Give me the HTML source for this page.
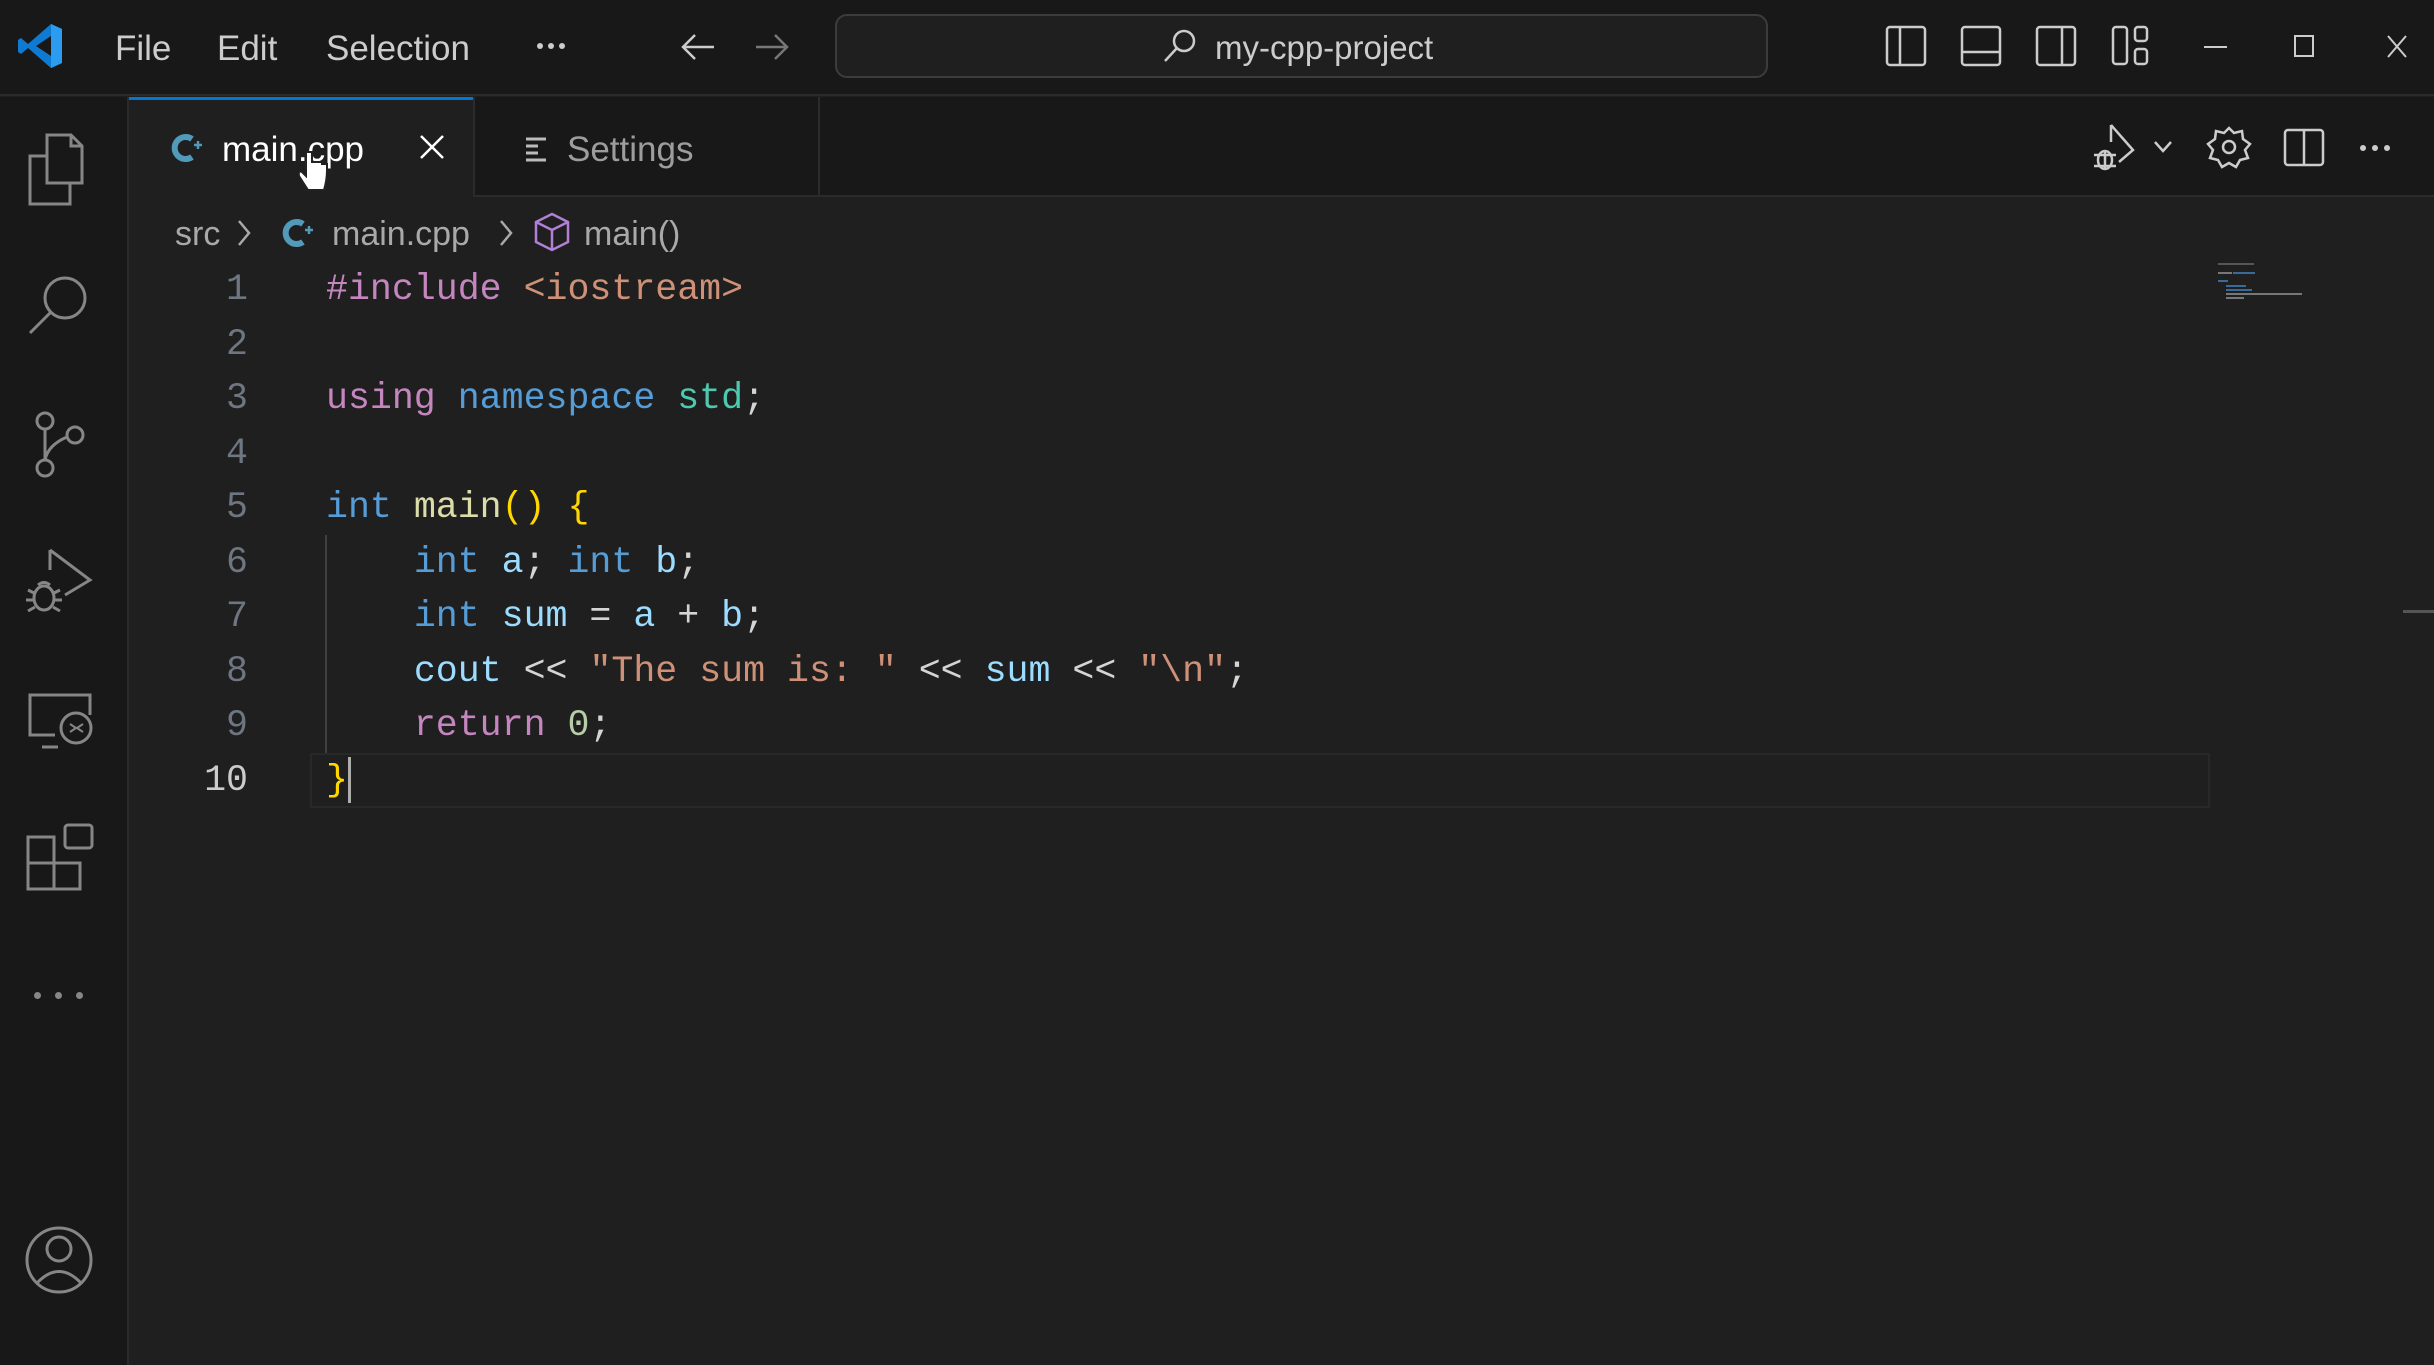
<!DOCTYPE html><html><head><meta charset="utf-8"><style>
*{margin:0;padding:0;box-sizing:border-box}
body{width:2434px;height:1365px;background:#1f1f1f;overflow:hidden;position:relative;font-family:"Liberation Sans",sans-serif;color:#ccc}
.a{position:absolute}
.t{position:absolute;white-space:pre;line-height:1}
svg{position:absolute;overflow:visible}
.code{font-family:"Liberation Mono",monospace;font-size:36.6px;white-space:pre;position:absolute;left:326px;height:54.5px;line-height:54.5px;color:#d4d4d4}
.ln{font-family:"Liberation Mono",monospace;font-size:36.6px;position:absolute;right:2186px;height:54.5px;line-height:54.5px;color:#6e7681}
.k{color:#c586c0}.s{color:#ce9178}.b{color:#569cd6}.ty{color:#4ec9b0}.f{color:#dcdcaa}.y{color:#ffd700}.v{color:#9cdcfe}.n{color:#b5cea8}
</style></head><body>
<!-- title bar -->
<div class="a" style="left:0;top:0;width:2434px;height:96px;background:#181818;border-bottom:2px solid #2b2b2b"></div>
<svg style="left:18px;top:22px" width="46" height="48" viewBox="0 0 46 48"><path d="M33 2 L44 7 V41 L33 46 L10 26 L3 32 L0 30 V18 L3 16 L10 22 Z" fill="#0f7ad1"/><path d="M33 2 L44 7 V41 L33 46 Z" fill="#2c9cf0"/><path d="M33 14 L18 24 L33 34 Z" fill="#181818"/></svg>
<div class="t" style="left:115px;top:31px;font-size:35px;color:#ccc">File</div>
<div class="t" style="left:217px;top:31px;font-size:35px;color:#ccc">Edit</div>
<div class="t" style="left:326px;top:31px;font-size:35px;color:#ccc">Selection</div>
<div class="a" style="left:537px;top:43px;width:6px;height:6px;border-radius:50%;background:#ccc;box-shadow:11px 0 #ccc,22px 0 #ccc"></div>
<svg style="left:680px;top:32px" width="36" height="30"><path d="M34 15 H3 M15 3 L3 15 L15 27" stroke="#ccc" stroke-width="2.5" fill="none"/></svg>
<svg style="left:754px;top:32px" width="36" height="30"><path d="M2 15 H33 M21 3 L33 15 L21 27" stroke="#777" stroke-width="2.5" fill="none"/></svg>
<div class="a" style="left:835px;top:14px;width:933px;height:64px;border:2px solid #3c3c3c;border-radius:12px;background:#1f1f1f"></div>
<svg style="left:1162px;top:28px" width="36" height="36"><circle cx="22" cy="13" r="10" stroke="#ccc" stroke-width="2.5" fill="none"/><path d="M15 20 L3 33" stroke="#ccc" stroke-width="2.5"/></svg>
<div class="t" style="left:1215px;top:31px;font-size:33px;color:#ccc">my-cpp-project</div>
<svg style="left:1886px;top:24px" width="300" height="48" fill="none" stroke="#ccc" stroke-width="2.5">
<rect x="1" y="3" width="38" height="38" rx="3"/><path d="M14 3 V41"/>
<rect x="76" y="3" width="38" height="38" rx="3"/><path d="M76 28 H114"/>
<rect x="151" y="3" width="38" height="38" rx="3"/><path d="M176 3 V41"/>
<rect x="227" y="3" width="14" height="37" rx="3"/><rect x="249" y="3" width="12" height="14" rx="3"/><rect x="249" y="25" width="12" height="15" rx="3"/></svg>
<svg style="left:2200px;top:30px" width="230" height="36" fill="none" stroke="#ccc" stroke-width="2"><path d="M4 17 H27"/><rect x="95" y="6" width="18" height="20"/><path d="M188 6 L206 27 M206 6 L188 27"/></svg>
<!-- activity bar -->
<div class="a" style="left:0;top:97px;width:129px;height:1268px;background:#181818;border-right:2px solid #2b2b2b"></div>
<svg style="left:0;top:0" width="129" height="1365" fill="none" stroke="#868686" stroke-width="3">
<path d="M47 135 H71 L82 146 V183 H47 Z M71 135 V146 H82"/><path d="M47 156 H30 V204 H70 V183"/>
<circle cx="65" cy="298" r="20"/><path d="M51 312 L30 333"/>
<circle cx="45" cy="421" r="8"/><circle cx="45" cy="468" r="8"/><circle cx="75" cy="435" r="8"/><path d="M45 429 V460 M45 460 Q48 445 67 437"/>
<path d="M50 550 L90 580 L65 595 M50 550 V570"/><ellipse cx="44" cy="598" rx="10" ry="12"/><path d="M28 590 L34 593 M60 590 L54 593 M26 600 H34 M62 600 H54 M28 611 L35 607 M60 611 L53 607 M38 585 Q44 580 50 585"/>
<path d="M90 715 V695 H30 V735 H55 M42 747 H58"/><circle cx="76" cy="728" r="15"/><path d="M70 724 L76 728 L70 732 M83 724 L77 728 L83 732" stroke-width="2"/>
<rect x="28" y="837" width="26" height="26"/><rect x="28" y="863" width="26" height="26"/><rect x="54" y="863" width="26" height="26"/><rect x="65" y="825" width="27" height="23" rx="3"/>
<circle cx="59" cy="1260" r="32"/><circle cx="59" cy="1249" r="12"/><path d="M37 1283 Q59 1260 81 1283"/>
</svg>
<div class="a" style="left:34px;top:992px;width:7px;height:7px;border-radius:50%;background:#868686;box-shadow:21px 0 #868686,42px 0 #868686"></div>
<!-- tab bar -->
<div class="a" style="left:129px;top:97px;width:2305px;height:100px;background:#181818;border-bottom:2px solid #2b2b2b"></div>
<div class="a" style="left:129px;top:97px;width:344px;height:102px;background:#1f1f1f;border-top:3px solid #0078d4"></div>
<div class="a" style="left:818px;top:97px;width:2px;height:100px;background:#2b2b2b"></div>
<div class="a" style="left:473px;top:97px;width:2px;height:100px;background:#2b2b2b"></div>
<svg style="left:172px;top:133px" width="34" height="30"><path d="M20 6 A11 11 0 1 0 20 24" stroke="#519aba" stroke-width="6" fill="none"/><path d="M22 12 H30 M26 8 V16" stroke="#519aba" stroke-width="2.5"/></svg>
<div class="t" style="left:222px;top:132px;font-size:35px;color:#fff">main.cpp</div>
<svg style="left:418px;top:133px" width="28" height="28"><path d="M3 3 L25 25 M25 3 L3 25" stroke="#fff" stroke-width="2.5"/></svg>
<svg style="left:524px;top:136px" width="26" height="26" stroke="#bbb" stroke-width="3"><path d="M2 3 H22 M2 10 H14 M2 17 H14 M2 24 H22"/></svg>
<div class="t" style="left:567px;top:132px;font-size:35px;color:#9d9d9d">Settings</div>
<svg style="left:2085px;top:120px" width="330" height="56" fill="none" stroke="#ccc" stroke-width="2.5">
<path d="M26 5 L48 30 L34 42 M26 5 V22"/><ellipse cx="20" cy="40" rx="7" ry="9"/><path d="M9 35 H31 M9 46 H31 M20 31 V50"/>
<path d="M70 22 L78 31 L86 22"/>
<circle cx="144" cy="27" r="6"/><path d="M144 8 L149 13 L157 11 L158 19 L165 24 L160 30 L163 38 L155 40 L151 47 L144 43 L137 47 L133 40 L125 38 L128 30 L123 24 L130 19 L131 11 L139 13 Z"/>
<rect x="200" y="10" width="38" height="35" rx="3"/><path d="M219 10 V45"/></svg>
<div class="a" style="left:2360px;top:145px;width:6px;height:6px;border-radius:50%;background:#ccc;box-shadow:12px 0 #ccc,24px 0 #ccc"></div>
<!-- cursor hand -->
<svg style="left:296px;top:150px" width="34" height="46"><path d="M10 2 V26 L6 22 Q2 20 3 26 L12 40 H28 Q31 30 31 20 V14 H26 V12 H21 V12 H16 V2 Z" fill="#fff" stroke="#222" stroke-width="2"/></svg>
<!-- breadcrumbs -->
<div class="t" style="left:175px;top:217px;font-size:34px;color:#a9a9a9">src</div>
<svg style="left:236px;top:218px" width="16" height="30"><path d="M3 3 L13 15 L3 27" stroke="#a9a9a9" stroke-width="2.5" fill="none"/></svg>
<svg style="left:283px;top:218px" width="34" height="30"><path d="M20 6 A11 11 0 1 0 20 24" stroke="#519aba" stroke-width="6" fill="none"/><path d="M22 12 H30 M26 8 V16" stroke="#519aba" stroke-width="2.5"/></svg>
<div class="t" style="left:332px;top:217px;font-size:34px;color:#a9a9a9">main.cpp</div>
<svg style="left:498px;top:218px" width="16" height="30"><path d="M3 3 L13 15 L3 27" stroke="#a9a9a9" stroke-width="2.5" fill="none"/></svg>
<svg style="left:534px;top:212px" width="36" height="40" fill="none" stroke="#b180d7" stroke-width="2.5"><path d="M18 2 L34 10 V30 L18 38 L2 30 V10 Z M2 10 L18 18 L34 10 M18 18 V38"/></svg>
<div class="t" style="left:584px;top:217px;font-size:34px;color:#a9a9a9">main()</div>
<!-- current line -->
<div class="a" style="left:310px;top:753px;width:1900px;height:55px;border:2px solid #282828"></div>
<div class="a" style="left:325px;top:535px;width:2px;height:218px;background:#404040"></div>
<!-- code -->
<div class="ln" style="top:263px">1</div><div class="code" style="top:263px"><span class="k">#include</span> <span class="s">&lt;iostream&gt;</span></div>
<div class="ln" style="top:317.5px">2</div>
<div class="ln" style="top:372px">3</div><div class="code" style="top:372px"><span class="k">using</span> <span class="b">namespace</span> <span class="ty">std</span>;</div>
<div class="ln" style="top:426.5px">4</div>
<div class="ln" style="top:481px">5</div><div class="code" style="top:481px"><span class="b">int</span> <span class="f">main</span><span class="y">()</span> <span class="y">{</span></div>
<div class="ln" style="top:535.5px">6</div><div class="code" style="top:535.5px">    <span class="b">int</span> <span class="v">a</span>; <span class="b">int</span> <span class="v">b</span>;</div>
<div class="ln" style="top:590px">7</div><div class="code" style="top:590px">    <span class="b">int</span> <span class="v">sum</span> = <span class="v">a</span> + <span class="v">b</span>;</div>
<div class="ln" style="top:644.5px">8</div><div class="code" style="top:644.5px">    <span class="v">cout</span> &lt;&lt; <span class="s">"The sum is: "</span> &lt;&lt; <span class="v">sum</span> &lt;&lt; <span class="s">"\n"</span>;</div>
<div class="ln" style="top:699px">9</div><div class="code" style="top:699px">    <span class="k">return</span> <span class="n">0</span>;</div>
<div class="ln" style="top:753.5px;color:#ccc">10</div><div class="code" style="top:753.5px"><span class="y">}</span></div>
<div class="a" style="left:348px;top:757px;width:3px;height:46px;background:#aeafad"></div>
<!-- minimap -->
<div class="a" style="left:2218px;top:263px;width:36px;height:2px;background:#555"></div>
<div class="a" style="left:2218px;top:272px;width:14px;height:2px;background:#777"></div><div class="a" style="left:2233px;top:272px;width:22px;height:2px;background:#3a6a9a"></div>
<div class="a" style="left:2218px;top:280px;width:10px;height:2px;background:#3a6a9a"></div>
<div class="a" style="left:2226px;top:285px;width:20px;height:2px;background:#3a6a9a"></div>
<div class="a" style="left:2226px;top:289px;width:26px;height:2px;background:#3a6a9a"></div>
<div class="a" style="left:2226px;top:293px;width:76px;height:2px;background:#777"></div>
<div class="a" style="left:2226px;top:297px;width:18px;height:2px;background:#777"></div>
<div class="a" style="left:2403px;top:610px;width:31px;height:3px;background:#555"></div>
</body></html>
